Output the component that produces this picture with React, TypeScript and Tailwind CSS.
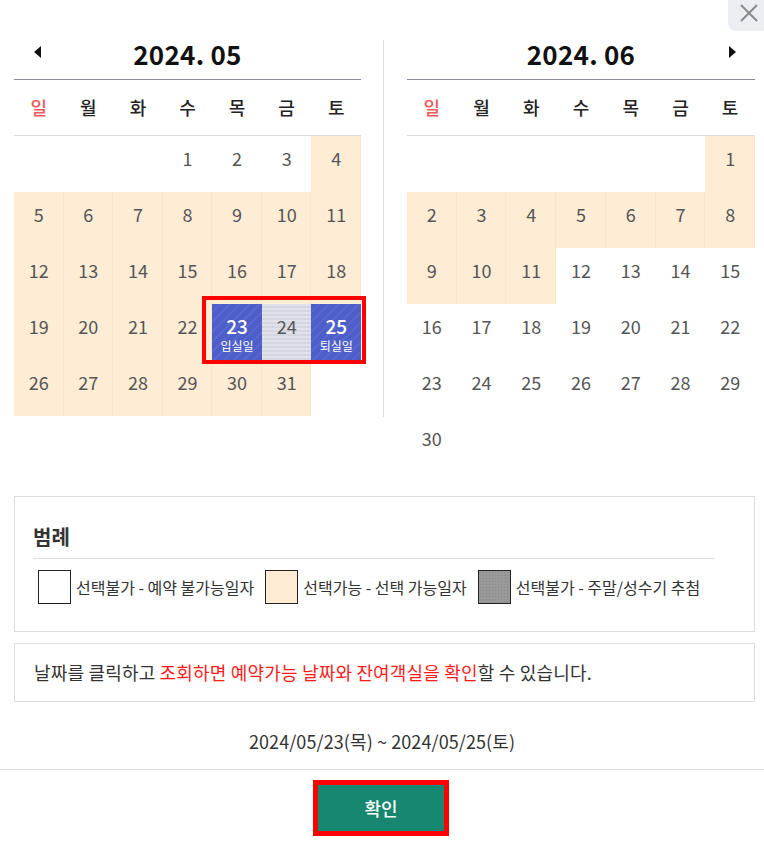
import { X } from "lucide-react";

type Cell = { day: number | null; open: boolean; kind?: "in" | "mid" | "out" };

const WEEK = ["일", "월", "화", "수", "목", "금", "토"];

function buildMonth(startDow: number, days: number, isOpen: (d: number) => boolean, marks: Record<number, Cell["kind"]> = {}): Cell[] {
  const cells: Cell[] = [];
  for (let i = 0; i < startDow; i++) cells.push({ day: null, open: false });
  for (let d = 1; d <= days; d++) cells.push({ day: d, open: isOpen(d), kind: marks[d] });
  while (cells.length % 7 !== 0) cells.push({ day: null, open: false });
  return cells;
}

const MAY = buildMonth(3, 31, (d) => d >= 4, { 23: "in", 24: "mid", 25: "out" });
const JUNE = buildMonth(6, 30, (d) => d <= 11);

function Triangle({ dir }: { dir: "left" | "right" }) {
  return (
    <svg width="8" height="12" viewBox="0 0 8 12" aria-hidden="true">
      {dir === "left" ? <path d="M7 0 L0 6 L7 12 Z" fill="#111" /> : <path d="M1 0 L8 6 L1 12 Z" fill="#111" />}
    </svg>
  );
}

function DayCell({ cell }: { cell: Cell }) {
  if (cell.kind === "in" || cell.kind === "out") {
    return (
      <div className="flex h-[56px] flex-col items-center bg-[repeating-linear-gradient(135deg,#4e5ec8_0px,#4e5ec8_5px,#5767cf_5px,#5767cf_7px)] pt-[12px] text-white">
        <span className="text-[19px] font-medium leading-[20px]">{cell.day}</span>
        <span className="mt-[2px] text-[12px] leading-[16px]">{cell.kind === "in" ? "입실일" : "퇴실일"}</span>
      </div>
    );
  }
  if (cell.kind === "mid") {
    return (
      <div className="flex h-[56px] justify-center bg-[repeating-linear-gradient(0deg,#d5d6e2_0px,#d5d6e2_2px,#e1e2eb_2px,#e1e2eb_4px)] pt-[8px] text-[18px] leading-[28px] text-[#555]">
        {cell.day}
      </div>
    );
  }
  return (
    <div
      className={
        cell.open
          ? "flex h-[56px] justify-center bg-[#ffecd5] pt-[8px] text-[18px] leading-[28px] text-[#555] shadow-[inset_-1px_0_0_#fbe5cc]"
          : "flex h-[56px] justify-center pt-[8px] text-[18px] leading-[28px] text-[#555]"
      }
    >
      {cell.day ?? ""}
    </div>
  );
}

function MonthView(props: { title: string; cells: Cell[]; arrow: "left" | "right"; width: string; highlight?: boolean }) {
  return (
    <div className={props.width + " shrink-0"}>
      <div className="relative flex h-[52px] items-center justify-center border-b border-[#8e8e9c]">
        <span className="text-[26px] font-bold tracking-[0.01em] text-[#111]">{props.title}</span>
        {props.arrow === "left" ? (
          <span className="absolute left-[20px] top-[18px]">
            <Triangle dir="left" />
          </span>
        ) : (
          <span className="absolute right-[19px] top-[18px]">
            <Triangle dir="right" />
          </span>
        )}
      </div>
      <div className="grid h-[56px] grid-cols-7 border-b border-[#dcdcdc]">
        {WEEK.map((w, i) => (
          <div key={w} className={i === 0 ? "flex items-center justify-center text-[18px] font-medium text-[#f05a5a]" : "flex items-center justify-center text-[18px] font-medium text-[#222]"}>
            {w}
          </div>
        ))}
      </div>
      <div className="relative grid grid-cols-7">
        {props.cells.map((c, i) => (
          <DayCell key={i} cell={c} />
        ))}
        {props.highlight ? <div className="absolute left-[188px] top-[160px] h-[68px] w-[164px] border-[4px] border-[#ff0000]" /> : null}
      </div>
    </div>
  );
}

function Swatch({ className }: { className: string }) {
  return <span className={"inline-block h-[34px] w-[33px] shrink-0 border border-[#222] " + className} />;
}

export default function App() {
  return (
    <div className="relative h-[841px] w-[764px] overflow-hidden bg-white font-['Noto_Sans_CJK_KR','Noto_Sans',sans-serif]">
      <button className="absolute right-0 top-0 flex h-[31px] w-[36px] items-center justify-center rounded-bl-[8px] bg-[#eceef2] text-[#8a8a8a]">
        <X className="ml-[6px] mt-[-6px] size-[30px]" strokeWidth={1.6} />
      </button>

      <div className="flex pl-[14px] pt-[28px]">
        <MonthView title="2024. 05" cells={MAY} arrow="left" width="w-[347px]" highlight />
        <div className="ml-[22px] mr-[23px] mt-[12px] h-[377px] w-px shrink-0 bg-[#dedede]" />
        <MonthView title="2024. 06" cells={JUNE} arrow="right" width="w-[348px]" />
      </div>

      <div className="ml-[14px] mt-[24px] h-[136px] w-[741px] border border-[#dedede] pl-[18px] pr-[40px] pt-[25px]">
        <h3 className="border-b border-[#dedede] pb-[6px] text-[20px] font-bold text-[#333]">범례</h3>
        <div className="mt-[11px] flex items-center text-[16px] text-[#333]">
          <span className="ml-[5px] flex items-center gap-[5px]">
            <Swatch className="bg-white" />
            선택불가 - 예약 불가능일자
          </span>
          <span className="ml-[11px] flex items-center gap-[5px]">
            <Swatch className="bg-[#ffecd5]" />
            선택가능 - 선택 가능일자
          </span>
          <span className="ml-[11px] flex items-center gap-[5px]">
            <Swatch className="bg-[#999] bg-[radial-gradient(#8a8a8a_1px,transparent_1px)] bg-[length:3px_3px]" />
            선택불가 - 주말/성수기 추첨
          </span>
        </div>
      </div>

      <div className="ml-[14px] mt-[11px] flex h-[59px] w-[741px] items-center border border-[#dedede] px-[19px] text-[18px] tracking-[0.01em] text-[#333]">
        <p>
          날짜를 클릭하고 <span className="text-[#ff1a1a]">조회하면 예약가능 날짜와 잔여객실을 확인</span>할 수 있습니다.
        </p>
      </div>

      <div className="mt-[25px] text-center text-[18px] leading-[28px] tracking-[0.005em] text-[#333]">2024/05/23(목) ~ 2024/05/25(토)</div>

      <div className="mt-[14px] flex justify-center border-t border-[#dedede] pt-[10px]">
        <div className="ml-[-2px] border-[5px] border-[#ff0000]">
          <button className="flex h-[46px] w-[126px] items-center justify-center bg-[#178770] text-[18px] font-medium text-white">확인</button>
        </div>
      </div>
    </div>
  );
}
